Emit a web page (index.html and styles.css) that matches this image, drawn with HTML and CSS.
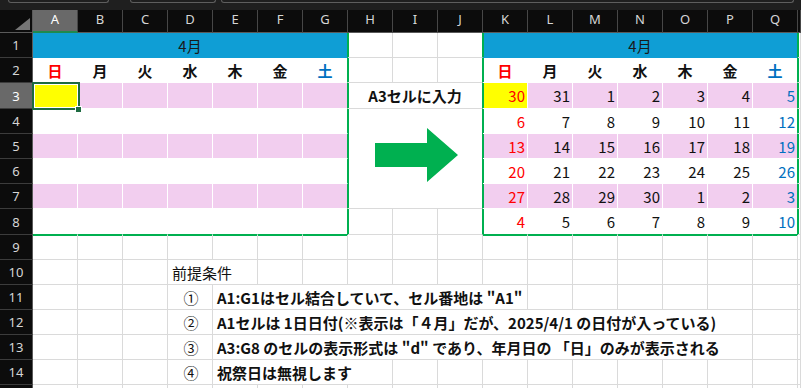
FILE: index.html
```html
<!DOCTYPE html>
<html lang="ja">
<head>
<meta charset="utf-8">
<title>カレンダー</title>
<link rel="stylesheet" href="styles.css">
</head>
<body>
<div class="topbar"><span class="box b1"></span><span class="box b2"></span><span class="box b3"></span></div>
<div class="sheet">
  <!-- column headers -->
  <div class="corner"><svg width="33" height="23" viewBox="0 0 33 23"><polygon points="15,20 30,20 30,8" fill="#767676"/></svg></div>
  <div class="ch on">A</div><div class="ch">B</div><div class="ch">C</div><div class="ch">D</div><div class="ch">E</div><div class="ch">F</div><div class="ch">G</div><div class="ch">H</div><div class="ch">I</div><div class="ch">J</div><div class="ch">K</div><div class="ch">L</div><div class="ch">M</div><div class="ch">N</div><div class="ch">O</div><div class="ch">P</div><div class="ch">Q</div><div class="ch"></div>

  <!-- row 1 -->
  <div class="rh">1</div>
  <div class="c bh sp7 gr">4月</div>
  <div class="c gl"></div><div class="c"></div><div class="c gr"></div>
  <div class="c bh sp7 gl gr">4月</div>
  <div class="c gl"></div>

  <!-- row 2 -->
  <div class="rh">2</div>
  <div class="c w day red">日</div><div class="c w day">月</div><div class="c w day">火</div><div class="c w day">水</div><div class="c w day">木</div><div class="c w day">金</div><div class="c w day blue gr">土</div>
  <div class="c gl"></div><div class="c"></div><div class="c gr"></div>
  <div class="c w day red gl">日</div><div class="c w day">月</div><div class="c w day">火</div><div class="c w day">水</div><div class="c w day">木</div><div class="c w day">金</div><div class="c w day blue gr">土</div>
  <div class="c gl"></div>

  <!-- row 3 -->
  <div class="rh on">3</div>
  <div class="c w yel sel"></div><div class="c w pk"></div><div class="c w pk"></div><div class="c w pk"></div><div class="c w pk"></div><div class="c w pk"></div><div class="c w pk gr"></div>
  <div class="c sp3 gl gr lbl">A3セルに入力</div>
  <div class="c w yel num red gl">30</div><div class="c w pk num">31</div><div class="c w pk num">1</div><div class="c w pk num">2</div><div class="c w pk num">3</div><div class="c w pk num">4</div><div class="c w pk num blue gr">5</div>
  <div class="c gl"></div>

  <!-- row 4 -->
  <div class="rh">4</div>
  <div class="c w"></div><div class="c w"></div><div class="c w"></div><div class="c w"></div><div class="c w"></div><div class="c w"></div><div class="c w gr"></div>
  <div class="c arrow sp3 rs4 gl gr"><svg width="134" height="99" viewBox="0 0 134 99"><polygon points="27,34 79,34 79,19 110,46 79,73 79,58 27,58" fill="#00b050"/></svg></div>
  <div class="c w num red gl">6</div><div class="c w num">7</div><div class="c w num">8</div><div class="c w num">9</div><div class="c w num">10</div><div class="c w num">11</div><div class="c w num blue gr">12</div>
  <div class="c gl"></div>

  <!-- row 5 -->
  <div class="rh">5</div>
  <div class="c w pk"></div><div class="c w pk"></div><div class="c w pk"></div><div class="c w pk"></div><div class="c w pk"></div><div class="c w pk"></div><div class="c w pk gr"></div>
  <div class="c w pk num red gl">13</div><div class="c w pk num">14</div><div class="c w pk num">15</div><div class="c w pk num">16</div><div class="c w pk num">17</div><div class="c w pk num">18</div><div class="c w pk num blue gr">19</div>
  <div class="c gl"></div>

  <!-- row 6 -->
  <div class="rh">6</div>
  <div class="c w"></div><div class="c w"></div><div class="c w"></div><div class="c w"></div><div class="c w"></div><div class="c w"></div><div class="c w gr"></div>
  <div class="c w num red gl">20</div><div class="c w num">21</div><div class="c w num">22</div><div class="c w num">23</div><div class="c w num">24</div><div class="c w num">25</div><div class="c w num blue gr">26</div>
  <div class="c gl"></div>

  <!-- row 7 -->
  <div class="rh">7</div>
  <div class="c w pk"></div><div class="c w pk"></div><div class="c w pk"></div><div class="c w pk"></div><div class="c w pk"></div><div class="c w pk"></div><div class="c w pk gr"></div>
  <div class="c w pk num red gl">27</div><div class="c w pk num">28</div><div class="c w pk num">29</div><div class="c w pk num">30</div><div class="c w pk num">1</div><div class="c w pk num">2</div><div class="c w pk num blue gr">3</div>
  <div class="c gl"></div>

  <!-- row 8 -->
  <div class="rh">8</div>
  <div class="c w gb"></div><div class="c w gb"></div><div class="c w gb"></div><div class="c w gb"></div><div class="c w gb"></div><div class="c w gb"></div><div class="c w gr gb"></div>
  <div class="c gl"></div><div class="c"></div><div class="c gr"></div>
  <div class="c w num red gl gb">4</div><div class="c w num gb">5</div><div class="c w num gb">6</div><div class="c w num gb">7</div><div class="c w num gb">8</div><div class="c w num gb">9</div><div class="c w num blue gr gb">10</div>
  <div class="c gl"></div>

  <!-- row 9 -->
  <div class="rh">9</div>
  <div class="c gt"></div><div class="c gt"></div><div class="c gt"></div><div class="c gt"></div><div class="c gt"></div><div class="c gt"></div><div class="c gt"></div>
  <div class="c"></div><div class="c"></div><div class="c"></div>
  <div class="c gt"></div><div class="c gt"></div><div class="c gt"></div><div class="c gt"></div><div class="c gt"></div><div class="c gt"></div><div class="c gt"></div>
  <div class="c"></div>

  <!-- row 10 -->
  <div class="rh">10</div>
  <div class="c"></div><div class="c"></div><div class="c"></div>
  <div class="c sp2 txt">前提条件</div>
  <div class="c"></div><div class="c"></div><div class="c"></div><div class="c"></div><div class="c"></div><div class="c"></div><div class="c"></div><div class="c"></div><div class="c"></div><div class="c"></div><div class="c"></div><div class="c"></div>
  <div class="c"></div>

  <!-- row 11 -->
  <div class="rh">11</div>
  <div class="c"></div><div class="c"></div><div class="c"></div>
  <div class="c circ">①</div>
  <div class="c sp7 txt b">A1:G1はセル結合していて、セル番地は "A1"</div>
  <div class="c"></div><div class="c"></div><div class="c"></div><div class="c"></div><div class="c"></div><div class="c"></div>
  <div class="c"></div>

  <!-- row 12 -->
  <div class="rh">12</div>
  <div class="c"></div><div class="c"></div><div class="c"></div>
  <div class="c circ">②</div>
  <div class="c sp12 txt b">A1セルは 1日日付(※表示は「４月」だが、2025/4/1 の日付が入っている)</div>
  <div class="c"></div>
  <div class="c"></div>

  <!-- row 13 -->
  <div class="rh">13</div>
  <div class="c"></div><div class="c"></div><div class="c"></div>
  <div class="c circ">③</div>
  <div class="c sp12 txt b">A3:G8 のセルの表示形式は "d" であり、年月日の 「日」のみが表示される</div>
  <div class="c"></div>
  <div class="c"></div>

  <!-- row 14 -->
  <div class="rh">14</div>
  <div class="c"></div><div class="c"></div><div class="c"></div>
  <div class="c circ">④</div>
  <div class="c sp4 txt b">祝祭日は無視します</div>
  <div class="c"></div><div class="c"></div><div class="c"></div><div class="c"></div><div class="c"></div><div class="c"></div><div class="c"></div><div class="c"></div><div class="c"></div>
  <div class="c"></div>

  <!-- row 15 -->
  <div class="rh"></div>
  <div class="c"></div><div class="c"></div><div class="c"></div><div class="c"></div><div class="c"></div><div class="c"></div><div class="c"></div><div class="c"></div><div class="c"></div><div class="c"></div><div class="c"></div><div class="c"></div><div class="c"></div><div class="c"></div><div class="c"></div><div class="c"></div><div class="c"></div>
  <div class="c"></div>
</div>
</body>
</html>
```

FILE: styles.css
```css
html, body {
  margin: 0;
  padding: 0;
  background: #ffffff;
  overflow: hidden;
  font-family: "Noto Sans CJK JP", "Noto Sans", sans-serif;
}

.topbar {
  height: 10px;
  background: #1f1f1f;
  display: flex;
  align-items: flex-start;
  padding-left: 8px;
  box-sizing: border-box;
}
.box {
  height: 3px;
  border: 1px solid #5e5e5e;
  border-top: 0;
  border-radius: 0 0 4px 4px;
  box-sizing: border-box;
}
.b1 { width: 101px; }
.b2 { width: 86px; margin-left: 21px; }
.b3 { width: 573px; margin-left: 5px; }

.sheet {
  display: grid;
  grid-template-columns: 33px repeat(17, 45px) 1fr;
  grid-template-rows: 23px 25px 25px 26px 25px 25px 25px 25px 26px 25px 25px 25px 25px 25px 25px 25px;
}

.corner {
  background: #0c0c0c;
  border-right: 1px solid #5a5a5a;
  border-bottom: 1px solid #5a5a5a;
  box-sizing: border-box;
}
.corner svg { display: block; }

.ch {
  background: #0c0c0c;
  color: #d6d6d6;
  font-family: "Noto Sans", "Open Sans", sans-serif;
  font-size: 13px;
  display: flex;
  align-items: center;
  justify-content: center;
  padding-bottom: 4px;
  border-right: 1px solid #474747;
  border-bottom: 1px solid #5a5a5a;
  box-sizing: border-box;
}
.ch.on {
  background: #696969;
  color: #ffffff;
  border-bottom: 2px solid #1f8a4e;
}

.rh {
  background: #0c0c0c;
  color: #d6d6d6;
  font-family: "Noto Sans", "Open Sans", sans-serif;
  font-size: 13px;
  display: flex;
  align-items: center;
  justify-content: center;
  border-right: 1px solid #5a5a5a;
  border-bottom: 1px solid #3c3c3c;
  box-sizing: border-box;
}
.rh.on {
  background: #696969;
  color: #ffffff;
}

.c {
  background: #ffffff;
  border-right: 1px solid #dadada;
  border-bottom: 1px solid #dadada;
  box-sizing: border-box;
  display: flex;
  align-items: center;
  min-width: 0;
  white-space: nowrap;
  font-size: 15px;
  color: #111111;
}

.sp2 { grid-column: span 2; }
.sp3 { grid-column: span 3; }
.sp4 { grid-column: span 4; }
.sp7 { grid-column: span 7; }
.sp12 { grid-column: span 12; }
.rs4 { grid-row: span 4; }

.w { border-color: #ffffff; }
.pk { background: #f2ceef; }
.yel { background: #ffff00; }
.bh {
  background: #0f9ed5;
  border-bottom-color: #0f9ed5;
  justify-content: center;
  color: #1a1a1a;
}

.gr { border-right-color: #00b050; }
.gb { border-bottom-color: #00b050; }
.gl { box-shadow: inset 1px 0 0 #00b050; }
.gt { box-shadow: inset 0 1px 0 #00b050; }

.day {
  justify-content: center;
  font-weight: 700;
}
.num {
  justify-content: flex-end;
  padding-right: 2px;
}
.red { color: #ff0000; }
.blue { color: #0070c0; }

.lbl {
  justify-content: center;
  font-weight: 700;
}

.arrow { align-items: flex-start; }
.arrow svg { display: block; }

.txt { padding-left: 4px; overflow: visible; }
.b { font-weight: 700; }
.circ { justify-content: center; padding-left: 2px; }

.sel { position: relative; }
.sel::before {
  content: "";
  position: absolute;
  left: -1px;
  top: -1px;
  width: 48px;
  height: 28px;
  border: 2px solid #1e6b41;
  box-sizing: border-box;
  box-shadow: inset 0 0 0 1px #ffffff;
}
.sel::after {
  content: "";
  position: absolute;
  left: 42px;
  top: 23px;
  width: 7px;
  height: 7px;
  background: #1e6b41;
  border: 1px solid #ffffff;
  box-sizing: border-box;
}
```
